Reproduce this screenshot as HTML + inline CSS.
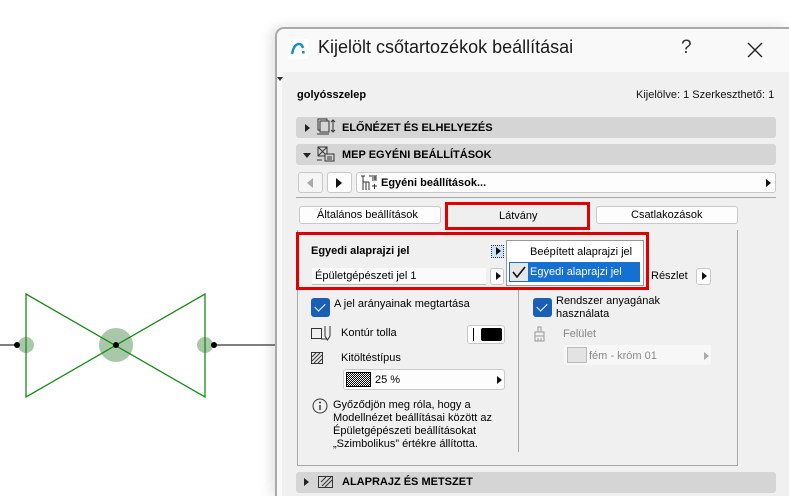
<!DOCTYPE html>
<html style="width:789px;height:496px;overflow:hidden"><head><meta charset="utf-8"><style>
*{margin:0;padding:0;box-sizing:border-box}
body{width:789px;height:496px;overflow:hidden;background:#fff;font-family:"Liberation Sans","DejaVu Sans",sans-serif;position:relative;color:#000}
.a{position:absolute}
.t{font-size:11px;white-space:nowrap}
.b{font-weight:bold}
.bar{position:absolute;left:296px;width:480px;height:21px;background:#d5d5d5;border-radius:3px}
.btn{position:absolute;background:#fdfdfd;border:1px solid #c9c9c9;border-radius:3px}
.red{position:absolute;border:3px solid #e00000}
.chk{position:absolute;width:19px;height:19px;background:#1a5fb4;border-radius:3px}
.chk:after{content:"";position:absolute;left:6px;top:3px;width:5px;height:9px;border:solid #fff;border-width:0 1.5px 1.5px 0;transform:rotate(45deg)}
.tri{position:absolute;width:0;height:0;border-top:4px solid transparent;border-bottom:4px solid transparent;border-left:5px solid #222}
</style></head><body>
<svg class="a" style="left:0;top:280px" width="280" height="130">
<line x1="0" y1="65" x2="17" y2="65" stroke="#000" stroke-width="1"/>
<line x1="214" y1="65" x2="280" y2="65" stroke="#000" stroke-width="1"/>
<circle cx="26" cy="65" r="8" fill="#a9c7a9"/>
<circle cx="205" cy="65" r="8" fill="#a9c7a9"/>
<circle cx="116" cy="65" r="17" fill="#a9c7a9"/>
<polygon points="26,14 26,117 205,14 205,117" fill="none" stroke="#1a8a1a" stroke-width="1.3"/>
<circle cx="17" cy="65" r="3" fill="#000"/><circle cx="214" cy="65" r="3" fill="#000"/><circle cx="116" cy="65" r="3" fill="#000"/>
</svg>
<div class="a" style="left:275px;top:27px;width:514px;height:469px;background:#f9f9f9;border:2px solid #aaa;border-right:0;border-bottom:0;border-radius:9px 0 0 0;box-shadow:-4px 0 12px rgba(0,0,0,0.12)"></div>
<div class="a" style="left:282px;top:72px;width:507px;height:424px;background:#f0f0f0"></div>
<svg class="a" style="left:288px;top:39px" width="20" height="20"><rect width="20" height="20" rx="2" fill="#fff"/><path d="M4 15 Q6 5 11 5 Q14 5 15 9" fill="none" stroke="#1a8fd0" stroke-width="2.6"/><rect x="14" y="12" width="2.6" height="2.6" fill="#1a8fd0"/></svg>
<div class="a" style="left:318px;top:37px;font-size:18px;color:#1a1a1a">Kijelölt csőtartozékok beállításai</div>
<div class="a" style="left:681px;top:37px;font-size:19px;color:#333">?</div>
<svg class="a" style="left:747px;top:42px" width="16" height="16"><path d="M1 1L15 15M15 1L1 15" stroke="#222" stroke-width="1.4"/></svg>
<div class="a" style="left:277px;top:77px;width:0;height:0;border-left:3px solid transparent;border-right:3px solid transparent;border-top:4px solid #333"></div>
<div class="a t b" style="left:297px;top:89px">golyósszelep</div>
<div class="a t" style="left:636px;top:89px;color:#111">Kijelölve: 1 Szerkeszthető: 1</div>
<div class="bar" style="top:117px"></div><div class="tri" style="left:305px;top:124px"></div>
<svg class="a" style="left:316px;top:118px" width="20" height="18"><rect x="2" y="1" width="9" height="11" fill="none" stroke="#333"/><rect x="4" y="3" width="9" height="11" fill="#d5d5d5" stroke="#333"/><path d="M1 16h12M17 2v12M15 4l2-2 2 2M15 12l2 2 2-2" stroke="#333" fill="none"/></svg>
<div class="a t b" style="left:342px;top:122px">ELŐNÉZET ÉS ELHELYEZÉS</div>
<div class="bar" style="top:144px"></div>
<div class="a" style="left:303px;top:153px;width:0;height:0;border-left:4px solid transparent;border-right:4px solid transparent;border-top:5px solid #222"></div>
<svg class="a" style="left:316px;top:145px" width="20" height="18"><rect x="2" y="2" width="9" height="9" fill="none" stroke="#333"/><path d="M2 2l9 9M11 2l-9 9" stroke="#333"/><rect x="9" y="9" width="9" height="7" fill="#d5d5d5" stroke="#333"/><path d="M11 12h5M11 14h5M1 15h5" stroke="#333"/></svg>
<div class="a t b" style="left:342px;top:149px">MEP EGYÉNI BEÁLLÍTÁSOK</div>
<div class="btn" style="left:298px;top:172px;width:25px;height:21px;background:#f5f5f5"></div>
<div class="a" style="left:307px;top:178px;width:0;height:0;border-top:5px solid transparent;border-bottom:5px solid transparent;border-right:6px solid #aaa"></div>
<div class="btn" style="left:327px;top:172px;width:25px;height:21px"></div>
<div class="a" style="left:336px;top:178px;width:0;height:0;border-top:5px solid transparent;border-bottom:5px solid transparent;border-left:6px solid #111"></div>
<div class="btn" style="left:356px;top:172px;width:420px;height:21px"></div>
<svg class="a" style="left:360px;top:174px" width="18" height="17"><path d="M1 2h4M9 2h8M3 2v14M15 2v4M3 8h6M6 8v8M9 8v8M12 12h5M14.5 10v5M12 4h5M12 6h5" stroke="#333" fill="none"/></svg>
<div class="a t b" style="left:381px;top:177px">Egyéni beállítások...</div>
<div class="tri" style="left:766px;top:179px;border-left-color:#111"></div>
<div class="a" style="left:296px;top:197px;width:480px;height:1px;background:#a8a8a8"></div>
<div class="btn" style="left:299px;top:206px;width:142px;height:18px"></div>
<div class="a t" style="left:317px;top:209px">Általános beállítások</div>
<div class="red" style="left:445px;top:202px;width:145px;height:28px"></div>
<div class="a" style="left:448px;top:205px;width:139px;height:22px;background:#efefef"></div>
<div class="a t" style="left:499px;top:210px">Látvány</div>
<div class="btn" style="left:596px;top:206px;width:142px;height:18px"></div>
<div class="a t" style="left:631px;top:209px">Csatlakozások</div>
<div class="a" style="left:297px;top:230px;width:441px;height:236px;border:1px solid #a8a8a8;border-top:0"></div>
<div class="a" style="left:518px;top:290px;width:1px;height:162px;background:#a8a8a8"></div>
<div class="red" style="left:296px;top:232px;width:353px;height:58px"></div>
<div class="a t b" style="left:311px;top:245px">Egyedi alaprajzi jel</div>
<div class="a" style="left:491px;top:245px;width:13px;height:13px;border:1px dotted #333;background:#cfe3f7"></div>
<div class="tri" style="left:496px;top:247px;border-left-color:#111"></div>
<div class="a" style="left:312px;top:268px;width:174px;height:17px;background:#fafafa;border-bottom:1px solid #bbb"></div>
<div class="a t" style="left:315px;top:270px">Épületgépészeti jel 1</div>
<div class="btn" style="left:490px;top:268px;width:14px;height:17px"></div>
<div class="tri" style="left:496px;top:272px;border-left-color:#111"></div>
<div class="a" style="left:506px;top:240px;width:138px;height:46px;background:#fff;border:1px solid #999"></div>
<div class="a t" style="left:530px;top:246px">Beépített alaprajzi jel</div>
<div class="a" style="left:509px;top:262px;width:131px;height:20px;background:#1470d2"></div>
<div class="a" style="left:510px;top:263px;width:18px;height:18px;background:#e6e6e6"></div>
<svg class="a" style="left:511px;top:264px" width="16" height="16"><path d="M2 8l4 5 8-10" stroke="#111" stroke-width="1.6" fill="none"/></svg>
<div class="a t" style="left:530px;top:266px;color:#fff">Egyedi alaprajzi jel</div>
<div class="a" style="left:649px;top:268px;width:52px;height:18px;background:#f0f0f0"></div>
<div class="a t" style="left:651px;top:270px">Részlet</div>
<div class="btn" style="left:696px;top:268px;width:15px;height:17px"></div>
<div class="tri" style="left:702px;top:272px;border-left-color:#111"></div>
<div class="chk" style="left:311px;top:298px"></div>
<div class="a t" style="left:334px;top:298px">A jel arányainak megtartása</div>
<svg class="a" style="left:311px;top:325px" width="22" height="20"><rect x="0.5" y="3.5" width="10" height="10" fill="none" stroke="#333"/><path d="M14 1v10l2.5 4 2.5-4V1M10 14h6" stroke="#333" fill="none"/></svg>
<div class="a t" style="left:341px;top:327px">Kontúr tolla</div>
<div class="btn" style="left:467px;top:325px;width:38px;height:19px"></div>
<div class="a" style="left:473px;top:328px;width:1px;height:13px;background:#000"></div>
<div class="a" style="left:481px;top:328px;width:21px;height:13px;background:#000;border-radius:2px"></div>
<svg class="a" style="left:311px;top:352px" width="13" height="13"><rect x="0.5" y="0.5" width="11" height="11" fill="none" stroke="#333"/><path d="M1 5l4-4M1 9l8-8M3 11l8-8M7 11l4-4" stroke="#333"/></svg>
<div class="a t" style="left:341px;top:352px">Kitöltéstípus</div>
<div class="btn" style="left:343px;top:369px;width:162px;height:21px"></div>
<div class="a" style="left:346px;top:372px;width:25px;height:15px;border:1px solid #000;background:repeating-conic-gradient(#000 0 25%,#fff 0 50%) 0 0/2px 2px"></div>
<div class="a t" style="left:375px;top:374px">25 %</div>
<div class="tri" style="left:497px;top:376px;border-left-color:#111"></div>
<svg class="a" style="left:312px;top:398px" width="16" height="16"><circle cx="8" cy="8" r="7" fill="none" stroke="#333"/><path d="M8 7v5" stroke="#333" stroke-width="1.4"/><circle cx="8" cy="4.5" r="1" fill="#333"/></svg>
<div class="a" style="left:333px;top:399px;font-size:11px;line-height:13px">Győződjön meg róla, hogy a<br>Modellnézet beállításai között az<br>Épületgépészeti beállításokat<br>„Szimbolikus” értékre állította.</div>
<div class="chk" style="left:533px;top:298px"></div>
<div class="a" style="left:556px;top:295px;font-size:11px;line-height:13px">Rendszer anyagának<br>használata</div>
<svg class="a" style="left:533px;top:326px" width="14" height="16"><path d="M5 1h3v5H5zM2 6h9v4H2zM2 10v5h9v-5M5 12v3M8 12v3" stroke="#999" fill="none"/></svg>
<div class="a t" style="left:563px;top:328px;color:#888">Felület</div>
<div class="a" style="left:564px;top:345px;width:147px;height:20px;background:#f7f7f7;border-radius:2px"></div>
<div class="a" style="left:567px;top:347px;width:20px;height:16px;background:#e3e3e3;border:1px solid #bbb"></div>
<div class="a t" style="left:589px;top:350px;color:#888">fém - króm 01</div>
<div class="tri" style="left:704px;top:352px;border-left-color:#aaa"></div>
<div class="bar" style="top:472px"></div><div class="tri" style="left:304px;top:478px"></div>
<svg class="a" style="left:317px;top:473px" width="18" height="18"><rect x="1.5" y="3.5" width="14" height="11" fill="none" stroke="#333"/><path d="M5 13l9-9M8 14l7-7M4 9l5-5" stroke="#333"/></svg>
<div class="a t b" style="left:342px;top:476px">ALAPRAJZ ÉS METSZET</div>
</body></html>
